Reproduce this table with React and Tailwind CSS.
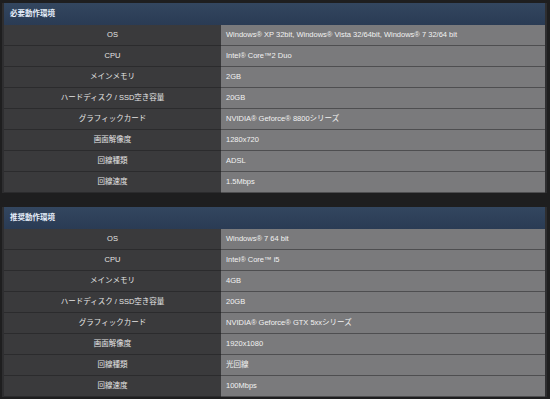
import React from "react";

const req = [
  ["OS", "Windows® XP 32bit, Windows® Vista 32/64bit, Windows® 7 32/64 bit"],
  ["CPU", "Intel® Core™2 Duo"],
  ["メインメモリ", "2GB"],
  ["ハードディスク / SSD空き容量", "20GB"],
  ["グラフィックカード", "NVIDIA® Geforce® 8800シリーズ"],
  ["画面解像度", "1280x720"],
  ["回線種類", "ADSL"],
  ["回線速度", "1.5Mbps"],
];

const rec = [
  ["OS", "Windows® 7 64 bit"],
  ["CPU", "Intel® Core™ i5"],
  ["メインメモリ", "4GB"],
  ["ハードディスク / SSD空き容量", "20GB"],
  ["グラフィックカード", "NVIDIA® Geforce® GTX 5xxシリーズ"],
  ["画面解像度", "1920x1080"],
  ["回線種類", "光回線"],
  ["回線速度", "100Mbps"],
];

function Section({ title, rows }) {
  return (
    <div className="flex flex-col border-x-[2px] border-[#2e2e30]">
      <div className="h-[22px] flex items-center pl-[6px] bg-gradient-to-b from-[#33465f] to-[#2a3b54] text-[7.5px] font-bold text-[#e6eefa]">
        {title}
      </div>
      <div className="grid grid-cols-[217px_1fr] bg-[#3a3a3c]">
        {rows.map(([k, v], i) => (
          <React.Fragment key={i}>
            <div className="h-[21px] flex items-center justify-center bg-[#3a3a3c] border-b border-[#2b2b2d] text-[7.5px] text-[#e4e4e4]">
              {k}
            </div>
            <div className="h-[21px] flex items-center pl-[5px] bg-[#7a7a7c] border-b border-[#4e4e50] text-[7.5px] text-[#f2f2f2]">
              {v}
            </div>
          </React.Fragment>
        ))}
      </div>
    </div>
  );
}

export default function App() {
  return (
    <div
      className="w-[550px] h-[399px] bg-[#1e1e1f] pt-[3px] pl-[2px] pr-[3px] flex flex-col gap-[14px]"
      style={{ fontFamily: '"Liberation Sans", "Noto Sans CJK JP", sans-serif' }}
    >
      <Section title="必要動作環境" rows={req} />
      <Section title="推奨動作環境" rows={rec} />
    </div>
  );
}
